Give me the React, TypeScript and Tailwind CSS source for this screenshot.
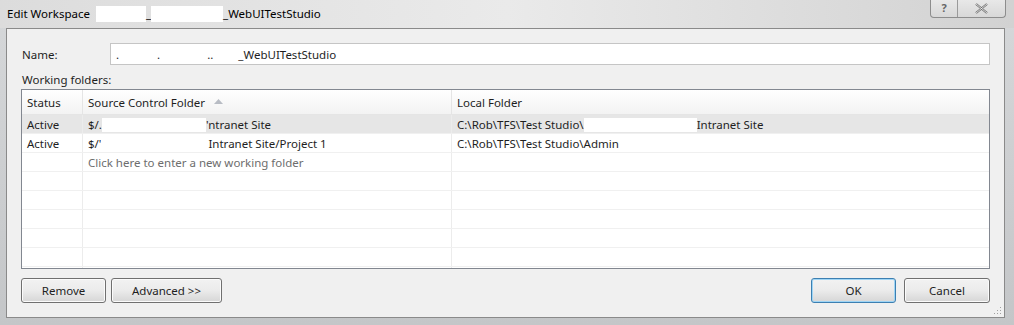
import React from 'react';

const font = { fontFamily: '"Noto Sans", "Open Sans", sans-serif' };

function Blank({ w }: { w: number }) {
  return <span className="inline-block h-[14px] bg-white align-middle" style={{ width: w }} />;
}

function Button({ label, w, primary }: { label: string; w: string; primary?: boolean }) {
  return (
    <button
      className={`${w} h-[25px] rounded-[3px] border text-[11.5px] text-[#1e1e1e] pt-[1px] bg-gradient-to-b from-[#f2f2f2] via-[#ebebeb] to-[#d6d6d6] ${
        primary
          ? 'border-[#3c7fb1] shadow-[inset_0_0_0_1px_#9fd5f5]'
          : 'border-[#707070] shadow-[inset_0_0_0_1px_#fbfbfb]'
      }`}
    >
      {label}
    </button>
  );
}

const rows = [
  {
    status: 'Active',
    source: (
      <>
        $/.<Blank w={104} />'ntranet Site
      </>
    ),
    local: (
      <>
        C:\Rob\TFS\Test Studio\<Blank w={113} />Intranet Site
      </>
    ),
    selected: true,
  },
  {
    status: 'Active',
    source: (
      <>
        $/'<Blank w={107} />Intranet Site/Project 1
      </>
    ),
    local: <>C:\Rob\TFS\Test Studio\Admin</>,
  },
];

export default function App() {
  return (
    <div className="w-[1014px] h-[325px] bg-gradient-to-b from-[#d6d8da] to-[#c4c6c8] flex flex-col pl-[6px] pr-[9px] overflow-hidden" style={font}>
      {/* Title bar */}
      <div className="h-[28px] flex items-center justify-between relative -ml-[6px] -mr-[9px] px-[7px] bg-gradient-to-r from-[#dcdcdc] via-[#eaeaea] to-[#d2d2d2]">
        <div className="flex items-center text-[11.5px] text-black">
          Edit Workspace
          <span className="ml-[6px] inline-block w-[50px] h-[16px] bg-white" />
          <span>_</span>
          <span className="inline-block w-[72px] h-[16px] bg-white" />
          <span>_WebUITestStudio</span>
        </div>
        <div className="absolute right-[8px] top-0 flex h-[18px] border border-t-0 border-[#8d8d8d] rounded-b-[4px] bg-gradient-to-b from-[#e8e8e8] to-[#d8d8d8]">
          <div className="w-[27px] flex items-center justify-center border-r border-[#9a9a9a] text-[11px] text-[#666] font-bold">?</div>
          <div className="w-[47px] flex items-center justify-center">
            <svg width="13" height="11" viewBox="0 0 13 11">
              <path d="M1 1 L12 10 M12 1 L1 10" stroke="#6a6a6a" strokeWidth="2.2" fill="none" />
              <path d="M1 1 L12 10 M12 1 L1 10" stroke="#f4f4f4" strokeWidth="0.8" fill="none" />
            </svg>
          </div>
        </div>
      </div>

      {/* Client area */}
      <div className="h-[290px] border border-[#8a8a8a] bg-[#f0f0f0] pl-[14px] pr-[14px] pt-[14px] relative text-[11.5px]">
        <div className="flex items-center h-[22px]">
          <span className="w-[89px] pl-[1px] pt-[2px] text-[#1e1e1e]">Name:</span>
          <div className="flex-1 h-[22px] border border-[#c5c5c5] bg-white flex items-center pl-[4px] pt-[1px] text-[#1e1e1e]">
            <span className="ml-[1px]">.</span>
            <span className="ml-[38px]">.</span>
            <span className="ml-[47px]">..</span>
            <span className="ml-[25px]">_WebUITestStudio</span>
          </div>
        </div>
        <div className="mt-[5px] pl-[1px] pt-[2px] text-[#1e1e1e] h-[18px] leading-[16px]">Working folders:</div>

        <div className="mt-[1px] h-[180px] border border-[#828790] bg-white text-[#1e1e1e] flex flex-col">
          <div className="h-[25px] flex bg-gradient-to-b from-[#ffffff] to-[#f3f3f3] border-b border-[#e5e5e5]">
            <div className="w-[61px] pl-[5px] pt-[1px] flex items-center border-r border-[#e5e5e5]">Status</div>
            <div className="w-[369px] pl-[5px] pt-[1px] flex items-center border-r border-[#e5e5e5]">
              Source Control Folder
              <svg className="ml-[9px] mb-[2px]" width="9" height="5" viewBox="0 0 9 5">
                <path d="M0 5 L4.5 0 L9 5 Z" fill="#b8bcc4" />
              </svg>
            </div>
            <div className="flex-1 pl-[5px] pt-[1px] flex items-center">Local Folder</div>
          </div>
          {rows.map((r, i) => (
            <div key={i} className={`h-[19px] flex border-b border-[#f0f0f0] ${r.selected ? 'bg-[#e6e6e6]' : ''}`}>
              <div className="w-[61px] pl-[5px] pt-[1px] flex items-center border-r border-[#ececec]">{r.status}</div>
              <div className="w-[369px] pl-[5px] pt-[1px] flex items-center border-r border-[#ececec] whitespace-nowrap">{r.source}</div>
              <div className="flex-1 pl-[5px] pt-[1px] flex items-center whitespace-nowrap">{r.local}</div>
            </div>
          ))}
          <div className="h-[19px] flex border-b border-[#f0f0f0]">
            <div className="w-[61px] border-r border-[#ececec]" />
            <div className="w-[369px] pl-[5px] pt-[1px] flex items-center border-r border-[#ececec] text-[#6d6d6d]">Click here to enter a new working folder</div>
            <div className="flex-1" />
          </div>
          {[0, 1, 2, 3, 4].map((i) => (
            <div key={i} className="h-[19px] flex border-b border-[#f0f0f0]">
              <div className="w-[61px] border-r border-[#ececec]" />
              <div className="w-[369px] border-r border-[#ececec]" />
              <div className="flex-1" />
            </div>
          ))}
          <div className="flex-1 flex">
            <div className="w-[61px] border-r border-[#ececec]" />
            <div className="w-[369px] border-r border-[#ececec]" />
          </div>
        </div>

        <div className="mt-[9px] flex items-center">
          <Button label="Remove" w="w-[85px]" />
          <span className="ml-[5px]">
            <Button label="Advanced >>" w="w-[111px]" />
          </span>
          <span className="ml-auto">
            <Button label="OK" w="w-[85px]" primary />
          </span>
          <span className="ml-[8px]">
            <Button label="Cancel" w="w-[86px]" />
          </span>
        </div>

        <svg className="absolute right-[2px] bottom-[2px]" width="10" height="10" viewBox="0 0 10 10">
          {[
            [8, 2], [8, 5], [5, 5], [8, 8], [5, 8], [2, 8],
          ].map(([x, y], i) => (
            <rect key={i} x={x} y={y} width="1" height="1" fill="#a0a0a0" />
          ))}
        </svg>
      </div>
    </div>
  );
}
